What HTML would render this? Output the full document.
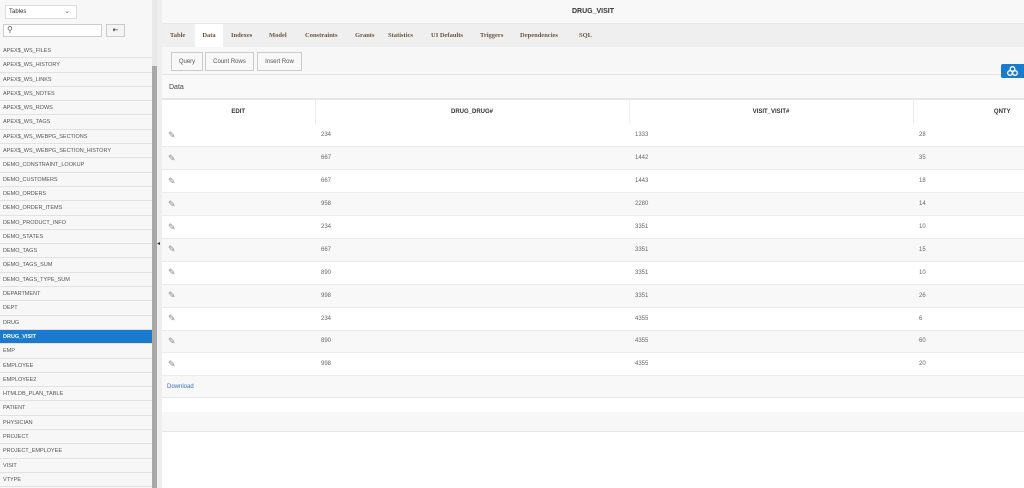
<!DOCTYPE html>
<html><head><style>
*{margin:0;padding:0;box-sizing:border-box}
body{width:1024px;height:488px;overflow:hidden;background:#fff;font-family:"Liberation Sans",sans-serif;position:relative}
#side{position:absolute;left:0;top:0;width:153px;height:488px;background:#f7f7f7}
.sel{position:absolute;left:5px;top:5px;width:72px;height:14px;border:1px solid #ddd;background:#fff;font-size:6px;color:#333;padding:3px 0 0 3px}
.sel span{position:absolute;right:6px;top:1px;font-size:7px;color:#666}
.search{position:absolute;left:3px;top:24px;width:99px;height:13px;border:1px solid #ccc;background:#fff}
.btn2{position:absolute;left:106px;top:24px;width:19px;height:13px;border:1px solid #ccc;background:#f4f4f4;font-size:7px;text-align:center;line-height:11px;color:#444}
#list{position:absolute;left:0;top:44px;width:153px}
#list div{height:14.3px;border-bottom:1px solid #e2e2e2;font-size:5.5px;color:#555;padding:4px 0 0 3px;white-space:nowrap;overflow:hidden;background:#f7f7f7}
#list div.a{background:#1a7acd;color:#fff;font-weight:bold}
#sb{position:absolute;left:152px;top:0;width:5px;height:488px;background:#e9e9e9}
#sb i{position:absolute;left:0;top:66px;width:5px;height:422px;background:#a8a8a8}
#split{position:absolute;left:157px;top:0;width:5px;height:488px;background:#eee}
#main{position:absolute;left:162px;top:0;width:862px;height:488px;background:#fff}
.title{height:24px;background:#f8f8f8;border-bottom:1px solid #e6e6e6;text-align:center;font-size:7px;font-weight:bold;color:#333;line-height:24px}
.tabs{height:23px;background:#efefef;font-family:"Liberation Serif",serif;font-size:6.5px;font-weight:bold;color:#6a5540;position:relative}
.tabs span{position:absolute;top:8px}
.tabs .on{background:#fff;top:0;height:23px;padding-top:8px;width:28px;text-align:center}
.tool{height:28px;background:#f7f7f7;position:relative;border-bottom:1px solid #e4e4e4}
.tool b{position:absolute;top:5px;height:19px;border:1px solid #ccc;background:#f8f8f8;font-weight:normal;font-size:6px;color:#555;line-height:19px;text-align:center}
.dh{height:25px;background:#f9f9f9;border-bottom:2px solid #e6e6e6;font-size:7px;color:#444;padding:9px 0 0 7px}
table{border-collapse:collapse;width:930px;font-size:6px;color:#666}
th{height:24px;font-weight:bold;color:#333;border-right:1px solid #eee;font-size:6px}
td{height:22.9px;border-bottom:1px solid #ececec;padding-left:6px}
tr.g td{background:#f8f8f8}
.ed{color:#888;font-size:9px}
.dl{height:22px;font-size:6px;color:#3a6fb0;padding:8px 0 0 5px;background:#f8f8f8;border-bottom:1px solid #e8e8e8}
.blu{position:absolute;left:1001px;top:64px;width:23px;height:14px;background:#1a7acd;border-radius:2px 0 0 2px}
</style></head><body>
<div id="side">
<div class="sel">Tables<span>⌄</span></div>
<div class="search"><span style="position:absolute;left:3px;top:0;font-size:8px;color:#555">⚲</span></div>
<div class="btn2">⇤</div>
<div id="list">
<div>APEX$_WS_FILES</div><div>APEX$_WS_HISTORY</div><div>APEX$_WS_LINKS</div><div>APEX$_WS_NOTES</div><div>APEX$_WS_ROWS</div><div>APEX$_WS_TAGS</div><div>APEX$_WS_WEBPG_SECTIONS</div><div>APEX$_WS_WEBPG_SECTION_HISTORY</div><div>DEMO_CONSTRAINT_LOOKUP</div><div>DEMO_CUSTOMERS</div><div>DEMO_ORDERS</div><div>DEMO_ORDER_ITEMS</div><div>DEMO_PRODUCT_INFO</div><div>DEMO_STATES</div><div>DEMO_TAGS</div><div>DEMO_TAGS_SUM</div><div>DEMO_TAGS_TYPE_SUM</div><div>DEPARTMENT</div><div>DEPT</div><div>DRUG</div><div class="a">DRUG_VISIT</div><div>EMP</div><div>EMPLOYEE</div><div>EMPLOYEE2</div><div>HTMLDB_PLAN_TABLE</div><div>PATIENT</div><div>PHYSICIAN</div><div>PROJECT</div><div>PROJECT_EMPLOYEE</div><div>VISIT</div><div>VTYPE</div>
</div></div>
<div id="sb"><i></i></div>
<div id="split"><span style="position:absolute;left:0;top:240px;font-size:6px;color:#333">◂</span></div>
<div id="main">
<div class="title">DRUG_VISIT</div>
<div class="tabs">
<span style="left:8px">Table</span><span class="on" style="left:33px">Data</span><span style="left:69px">Indexes</span><span style="left:107px">Model</span><span style="left:143px">Constraints</span><span style="left:193px">Grants</span><span style="left:226px">Statistics</span><span style="left:269px">UI Defaults</span><span style="left:318px">Triggers</span><span style="left:358px">Dependencies</span><span style="left:417px">SQL</span>
</div>
<div class="tool"><b style="left:9px;width:32px">Query</b><b style="left:43px;width:49px">Count Rows</b><b style="left:95px;width:45px">Insert Row</b></div>
<div class="dh">Data</div>
<table>
<tr><th style="width:153px">EDIT</th><th style="width:314px">DRUG_DRUG#</th><th style="width:284px">VISIT_VISIT#</th><th style="text-align:center;padding-left:0">QNTY</th></tr>
<tr><td class="ed">✎</td><td>234</td><td>1333</td><td>28</td></tr>
<tr class="g"><td class="ed">✎</td><td>667</td><td>1442</td><td>35</td></tr>
<tr><td class="ed">✎</td><td>667</td><td>1443</td><td>18</td></tr>
<tr class="g"><td class="ed">✎</td><td>958</td><td>2280</td><td>14</td></tr>
<tr><td class="ed">✎</td><td>234</td><td>3351</td><td>10</td></tr>
<tr class="g"><td class="ed">✎</td><td>667</td><td>3351</td><td>15</td></tr>
<tr><td class="ed">✎</td><td>890</td><td>3351</td><td>10</td></tr>
<tr class="g"><td class="ed">✎</td><td>998</td><td>3351</td><td>26</td></tr>
<tr><td class="ed">✎</td><td>234</td><td>4355</td><td>6</td></tr>
<tr class="g"><td class="ed">✎</td><td>890</td><td>4355</td><td>60</td></tr>
<tr><td class="ed">✎</td><td>998</td><td>4355</td><td>20</td></tr>
</table>
<div class="dl">Download</div>
<div style="height:14px"></div>
<div style="height:20px;background:#f7f7f7;border-bottom:1px solid #e6e6e6"></div>
</div>
<div class="blu"><svg width="23" height="14" viewBox="0 0 23 14"><g fill="none" stroke="#fff" stroke-width="1.3"><circle cx="11.5" cy="5" r="2.3"/><circle cx="9" cy="9" r="2.3"/><circle cx="14" cy="9" r="2.3"/></g></svg></div>
</body></html>
